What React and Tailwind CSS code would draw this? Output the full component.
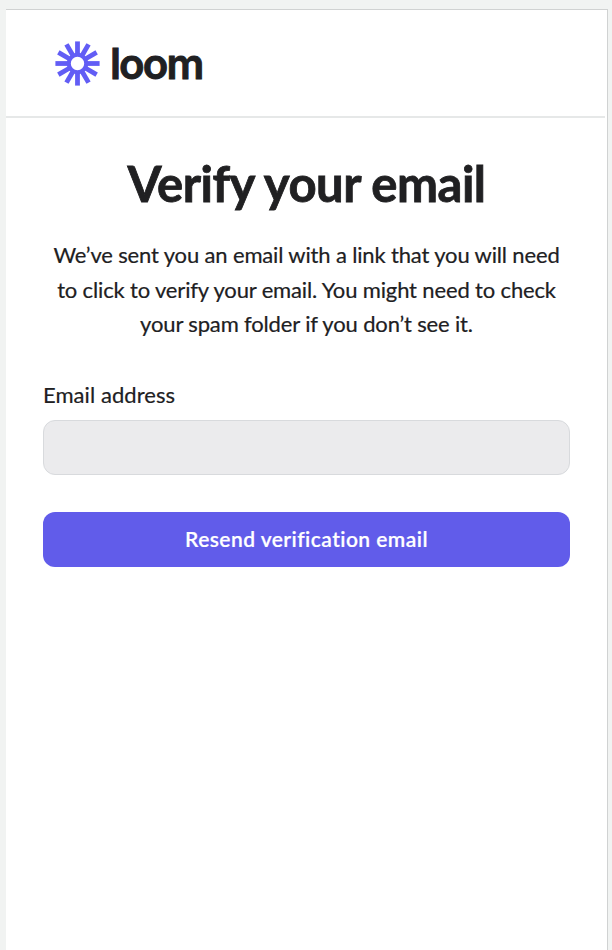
const spokes = [0, 30, 60, 90, 120, 150, 180, 210, 240, 270, 300, 330];

function Logo() {
  return (
    <div className="flex items-start">
      <svg className="mt-px ml-px h-[45px] w-[45px]" viewBox="-22.5 -22.5 45 45">
        <g stroke="#625df5" strokeWidth="4.8">
          {spokes.map((angle) => (
            <line key={angle} x1="0" y1="-8" x2="0" y2="-22.1" transform={`rotate(${angle})`} />
          ))}
        </g>
        <circle r="8.7" fill="none" stroke="#625df5" strokeWidth="4" />
      </svg>
      <span className="ml-[10px] mt-px text-[42px] font-semibold leading-[46px] tracking-[-1.9px] [-webkit-text-stroke:0.9px_#202022]">loom</span>
    </div>
  );
}

export default function App() {
  return (
    <div className="flex h-[950px] w-[612px] overflow-hidden bg-[#f1f3f2] pl-[6px] pr-[4px] pt-[9px] font-['Lato',sans-serif] text-[#202022] [font-variant-ligatures:none]">
      <div className="flex w-full flex-col border-r border-t border-[#d0d2d2] bg-white">
        <header className="mr-[2px] h-[108px] border-b-2 border-[#e6e8e8] pl-[48px] pt-[30px] font-['Inter',sans-serif]">
          <Logo />
        </header>
        <main className="flex flex-col px-[37px] pt-[35px]">
          <h1 className="whitespace-nowrap text-center text-[49px] font-bold leading-[60px] tracking-[-0.5px] [-webkit-text-stroke:0.8px_#202022]">Verify your email</h1>
          <p className="mt-[25px] whitespace-nowrap text-center text-[22px] leading-[34.5px] tracking-[-0.15px] [-webkit-text-stroke:0.2px_#202022]">
            We’ve sent you an email with a link that you will need<br />to click to verify your email. You might need to check<br />your spam folder if you don’t see it.
          </p>
          <label className="mt-[38px] text-[22px] leading-[30px] tracking-[0.06px] [-webkit-text-stroke:0.2px_#202022]">Email address</label>
          <input aria-label="Email address" className="mt-[10px] h-[55px] rounded-[12px] border border-[#d8dadd] bg-[#ebebed] px-4" />
          <button className="mt-[37px] h-[55px] rounded-[12px] bg-[#615cea] text-[21px] font-semibold tracking-[0.45px] text-white [-webkit-text-stroke:0.2px_white]">Resend verification email</button>
        </main>
      </div>
    </div>
  );
}
